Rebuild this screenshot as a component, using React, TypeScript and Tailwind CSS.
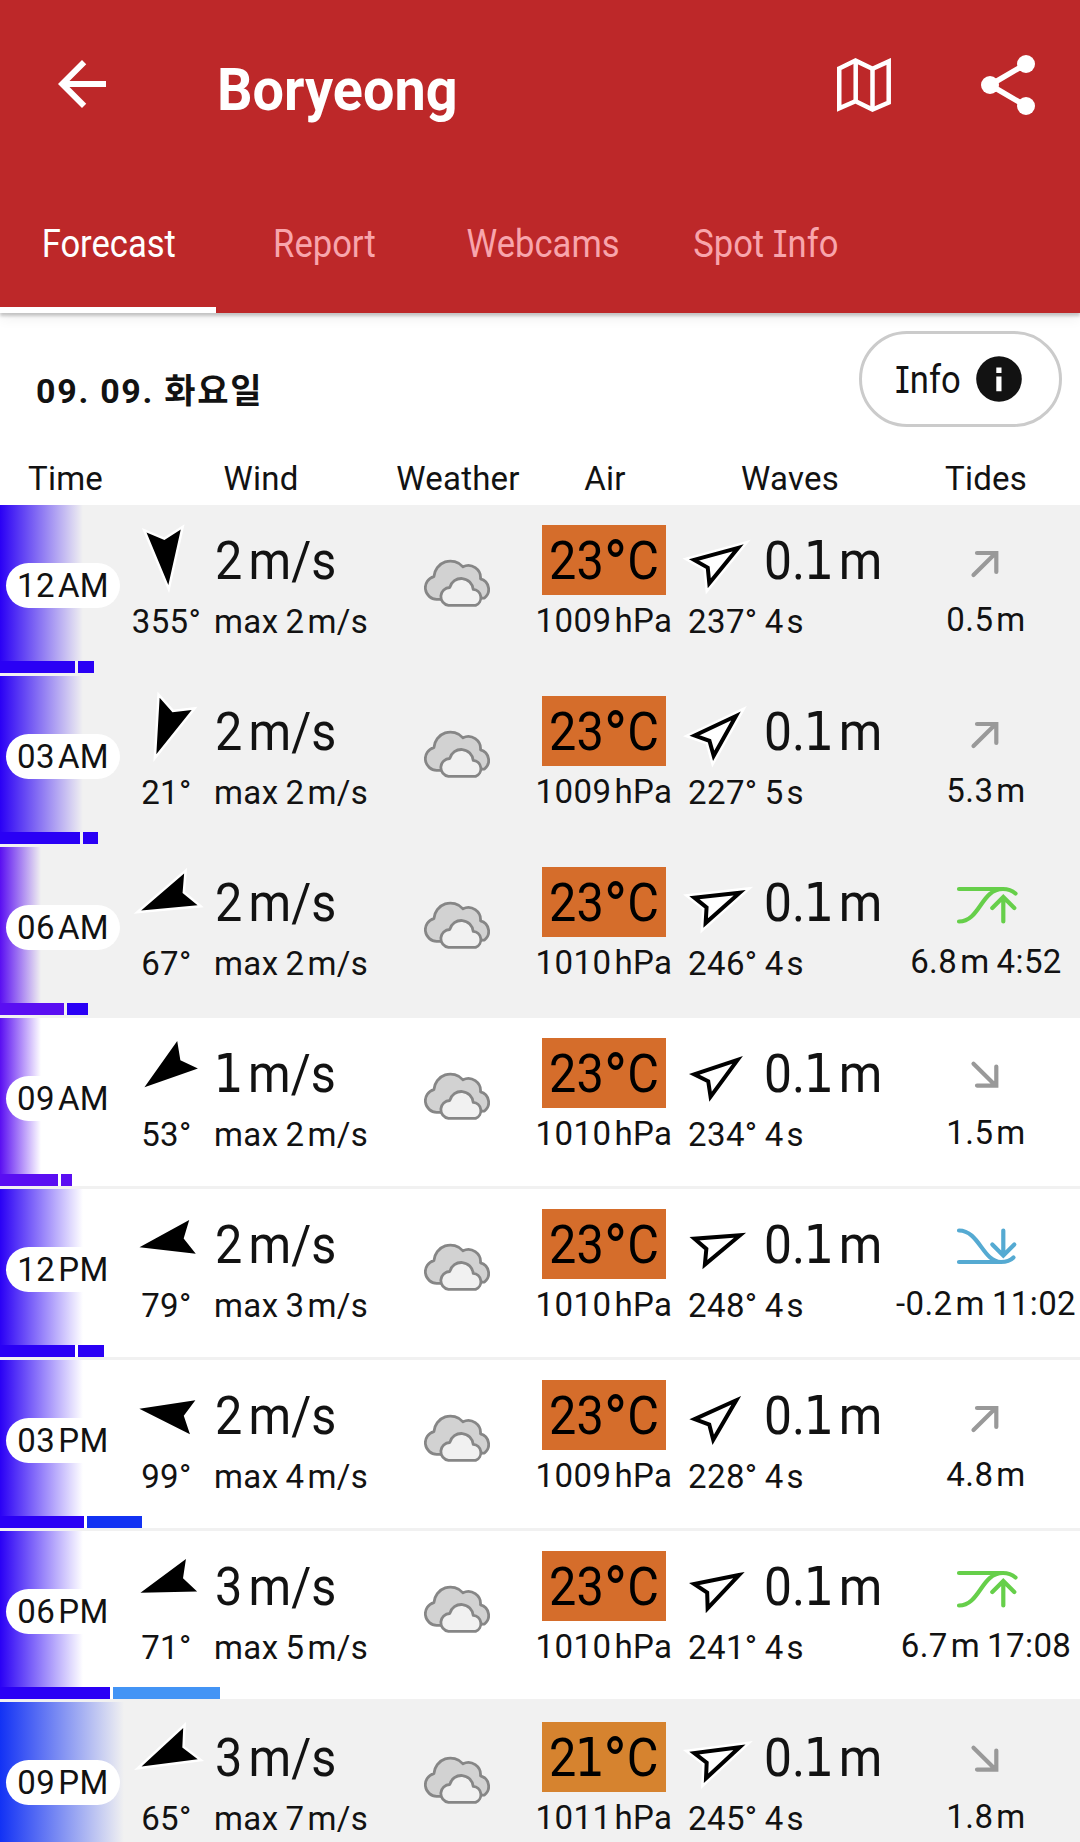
import { clsx } from "clsx";

const ROBOTO = "font-['Roboto','Noto_Sans_CJK_KR',sans-serif]";

const COLUMNS = "grid grid-cols-[130px_262px_132px_162px_206px_188px]";

const TABS = [
  { label: "Forecast", width: "w-[216px]" },
  { label: "Report", width: "w-[215px]" },
  { label: "Webcams", width: "w-[223px]" },
  { label: "Spot Info", width: "w-[222px]" },
];

type Tide = "rising" | "falling" | "high" | "low";

interface Forecast {
  hour: string;
  period: "AM" | "PM";
  night?: boolean;
  fade: string;
  bars: { width: number; color: string }[];
  windDir: number;
  wind: number;
  gust: number;
  temp: number;
  tempColor: string;
  pressure: number;
  waveDir: number;
  wavePeriod: number;
  tide: Tide;
  level: string;
  tideTime?: string;
}

const BLUE_FADE = "w-[83px] from-[#2a00f5]";
const VIOLET_FADE = "w-[41px] from-[#5a0ef2]";
const BLUE = "bg-[#2a00f5]";
const VIOLET = "bg-[#5a0ef2]";
const HOT = "bg-[#d56d2b]";

const ROWS: Forecast[] = [
  { hour: "12", period: "AM", night: true, fade: BLUE_FADE, bars: [{ width: 75, color: BLUE }, { width: 16, color: BLUE }], windDir: 355, wind: 2, gust: 2, temp: 23, tempColor: HOT, pressure: 1009, waveDir: 237, wavePeriod: 4, tide: "rising", level: "0.5" },
  { hour: "03", period: "AM", night: true, fade: BLUE_FADE, bars: [{ width: 80, color: BLUE }, { width: 15, color: BLUE }], windDir: 21, wind: 2, gust: 2, temp: 23, tempColor: HOT, pressure: 1009, waveDir: 227, wavePeriod: 5, tide: "rising", level: "5.3" },
  { hour: "06", period: "AM", night: true, fade: VIOLET_FADE, bars: [{ width: 64, color: VIOLET }, { width: 21, color: BLUE }], windDir: 67, wind: 2, gust: 2, temp: 23, tempColor: HOT, pressure: 1010, waveDir: 246, wavePeriod: 4, tide: "high", level: "6.8", tideTime: "4:52" },
  { hour: "09", period: "AM", fade: VIOLET_FADE, bars: [{ width: 58, color: VIOLET }, { width: 11, color: VIOLET }], windDir: 53, wind: 1, gust: 2, temp: 23, tempColor: HOT, pressure: 1010, waveDir: 234, wavePeriod: 4, tide: "falling", level: "1.5" },
  { hour: "12", period: "PM", fade: BLUE_FADE, bars: [{ width: 75, color: BLUE }, { width: 26, color: BLUE }], windDir: 79, wind: 2, gust: 3, temp: 23, tempColor: HOT, pressure: 1010, waveDir: 248, wavePeriod: 4, tide: "low", level: "-0.2", tideTime: "11:02" },
  { hour: "03", period: "PM", fade: BLUE_FADE, bars: [{ width: 84, color: BLUE }, { width: 55, color: "bg-[#1232f3]" }], windDir: 99, wind: 2, gust: 4, temp: 23, tempColor: HOT, pressure: 1009, waveDir: 228, wavePeriod: 4, tide: "rising", level: "4.8" },
  { hour: "06", period: "PM", fade: BLUE_FADE, bars: [{ width: 110, color: BLUE }, { width: 107, color: "bg-[#4394f5]" }], windDir: 71, wind: 3, gust: 5, temp: 23, tempColor: HOT, pressure: 1010, waveDir: 241, wavePeriod: 4, tide: "high", level: "6.7", tideTime: "17:08" },
  { hour: "09", period: "PM", night: true, fade: "w-[124px] from-[#1232f5]", bars: [{ width: 116, color: "bg-[#1232f3]" }], windDir: 65, wind: 3, gust: 7, temp: 21, tempColor: "bg-[#d6832f]", pressure: 1011, waveDir: 245, wavePeriod: 4, tide: "falling", level: "1.8" },
];

function BackIcon() {
  return (
    <svg viewBox="0 0 24 24" className="size-[72px]" fill="white">
      <path d="M20 11H7.83l5.59-5.59L12 4l-8 8 8 8 1.41-1.41L7.83 13H20v-2z" />
    </svg>
  );
}

function MapIcon() {
  return (
    <svg viewBox="0 0 54 54" className="h-[54px] w-[54px]" fill="none" stroke="white" strokeWidth="4.5">
      <path d="M2.25 10.5 18.5 2.6l17 8.2 16.2-7.4v41.1l-16.2 7-17-8.2-16.25 7z" />
      <path d="M18.7 3v40M35.5 11v40" />
    </svg>
  );
}

function ShareIcon() {
  return (
    <svg viewBox="0 0 54 60" className="h-[60px] w-[54px]" fill="white" stroke="white">
      <path d="M45 9 9 30l36 21" fill="none" strokeWidth="5.5" />
      <g stroke="none">
        <circle cx="45" cy="9" r="9" />
        <circle cx="9" cy="30" r="9" />
        <circle cx="45" cy="51" r="9" />
      </g>
    </svg>
  );
}

function InfoIcon() {
  return (
    <svg viewBox="0 0 46 46" className="size-[46px]">
      <circle cx="23" cy="23" r="22.8" fill="#121212" />
      <path d="M20.3 11.5h5.2V17h-5.2zM20.3 20.5h5.2v14.7h-5.2z" fill="white" />
    </svg>
  );
}

function WindArrow({ degrees }: { degrees: number }) {
  return (
    <svg viewBox="-35 -36 72 72" className="size-[72px] overflow-visible">
      <g transform={`rotate(${degrees})`} strokeMiterlimit="10">
        <path d="M0 27 17.2-27 0-18-17.2-27z" fill="black" stroke="white" strokeWidth="5" paintOrder="stroke" />
      </g>
    </svg>
  );
}

function WaveArrow({ degrees }: { degrees: number }) {
  return (
    <svg viewBox="-35 -36 70 72" className="h-[72px] w-[70px] overflow-visible">
      <g transform={`rotate(${degrees})`} strokeMiterlimit="10">
        <path d="M0 27 17.2-27 0-18-17.2-27z" fill="white" stroke="white" strokeWidth="5" />
        <path d="M0 20.5 13.9-23 0-15.8-13.9-23z" fill="white" stroke="black" strokeWidth="4" />
      </g>
    </svg>
  );
}

function CloudIcon() {
  return (
    <svg viewBox="0 0 66 48" className="h-12 w-[66px]" stroke="#868686" strokeWidth="2.8" strokeLinejoin="round">
      <path
        d="M18 40.3H12.7A11.55 11.55 0 0 1 9.9 17.6 16.6 16.6 0 0 1 39 7.8 12.2 12.2 0 0 1 56.5 19.8 11 11 0 0 1 60.5 39z"
        fill="#d2d2d2"
      />
      <path
        d="M24.5 46.4A9 9 0 0 1 25.8 28.5 11.9 11.9 0 0 1 49.2 30.4 8.3 8.3 0 0 1 51.6 46.4z"
        fill="#f1f1f1"
      />
    </svg>
  );
}

const TIDE_ICONS: Record<Tide, { color: string; d: string }> = {
  rising: { color: "#999999", d: "M16.5 30 38.5 8.2M20 8H39.3V27" },
  falling: { color: "#999999", d: "M16.5 5.8 38.5 27.5M20 27.6H39.3V8.6" },
  high: {
    color: "#66cf4a",
    d: "M2 2H46C52 2 55 3.5 58.5 6.5M2 34.5C23 34.5 24 2 46 2M46.3 34.5V10M35.3 21 46.3 10 57.3 21",
  },
  low: {
    color: "#55aad2",
    d: "M2 1.5C22 1.5 26 33 44 33 50 33 53 32 56.5 28.5M2 33H44M46.3 1.5V26M35.3 15.5 46.3 26.5 57.3 15.5",
  },
};

function TideIcon({ tide }: { tide: Tide }) {
  const { color, d } = TIDE_ICONS[tide];
  return (
    <svg viewBox="0 0 60 37" className="ml-[2px] h-[37px] w-[60px] overflow-visible">
      <path d={d} fill="none" stroke={color} strokeWidth="4.2" strokeLinecap="round" strokeLinejoin="miter" />
    </svg>
  );
}

function Unit({ children }: { children: string }) {
  return <span className="ml-[3px]">{children}</span>;
}

// Large figures; the "1" stands on a foot and the degree ring is as wide as a digit.
function Figure({ value, unit, className }: { value: string; unit?: string; className?: string }) {
  return (
    <span className={clsx("block w-fit text-[54px] tracking-normal whitespace-nowrap", className)}>
      {value.split("").map((char, i) => {
        if (char === "1") {
          return (
            <span key={i} className="-mx-[2px] font-['DejaVu_Sans'] text-[53px] leading-none">
              {char}
            </span>
          );
        }
        if (char === "°") {
          return (
            <span key={i} className="align-[-11px] text-[70px] leading-[0]">
              {char}
            </span>
          );
        }
        return char;
      })}
      {unit && <span className="ml-[7px]">{unit}</span>}
    </span>
  );
}

function SerifI() {
  return <span className="font-['Inter'] text-[37px] leading-none [font-feature-settings:'cv08','ss02']">I</span>;
}

function Header() {
  return (
    <header className="relative h-[313px] bg-[#bd2829] text-white shadow-[0_3px_3px_rgba(0,0,0,0.2),0_6px_12px_rgba(0,0,0,0.06)]">
      <div className="flex h-[200px] items-start pr-[45px] pl-[46px]">
        <div className="mt-12">
          <BackIcon />
        </div>
        <h1 className="mt-[50px] ml-[99px] origin-left scale-x-[0.93] text-[60px] leading-[80px] font-bold">
          Boryeong
        </h1>
        <div className="mt-[58px] ml-auto">
          <MapIcon />
        </div>
        <div className="mt-[55px] ml-[90px]">
          <ShareIcon />
        </div>
      </div>
      <nav className="flex h-[113px] text-[38px] leading-[50px]">
        {TABS.map(({ label, width }, i) => (
          <div
            key={label}
            className={clsx(
              "flex justify-center border-b-[6px] pt-[19px] pl-[2px]",
              width,
              i === 0 ? "border-white" : "border-transparent text-[#f8a5ac]",
            )}
          >
            <span className="scale-x-[0.91] whitespace-nowrap">
              {label === "Spot Info" ? <>Spot <SerifI />nfo</> : label}
            </span>
          </div>
        ))}
      </nav>
    </header>
  );
}

function ForecastRow({ row }: { row: Forecast }) {
  return (
    <div
      className={clsx(
        COLUMNS,
        "h-[171px] border-b-[3px] border-[#f1f1f1] tracking-[0.4px] [word-spacing:-1.5px]",
        row.night ? "bg-[#f1f1f1]" : "bg-white",
      )}
    >
      <div>
        <div className="grid h-[156px]">
          <div className={clsx("col-start-1 row-start-1 bg-linear-to-r to-transparent", row.fade)} />
          <div className="col-start-1 row-start-1 mt-[58px] ml-1.5 h-[45px] w-[114px] rounded-full bg-white text-center leading-[45px]">
            {row.hour}
            <Unit>{row.period}</Unit>
          </div>
        </div>
        <div className="flex h-3 gap-[3px]">
          {row.bars.map((bar, i) => (
            <div key={i} className={clsx("shrink-0", bar.color)} style={{ width: bar.width }} />
          ))}
        </div>
      </div>

      <div className="flex">
        <div className="flex w-[73px] flex-col items-center pt-[17px]">
          <WindArrow degrees={row.windDir} />
          <div className="mt-2 leading-10">{row.windDir}°</div>
        </div>
        <div className="ml-[11px] pt-6">
          <div className="h-16 leading-16">
            <Figure value={`${row.wind}`} unit="m/s" className="ml-px origin-left scale-x-90" />
          </div>
          <div className="mt-[9px] leading-10 whitespace-nowrap">
            max {row.gust}
            <Unit>m/s</Unit>
          </div>
        </div>
      </div>

      <div className="flex justify-center pt-[54px] pr-[2px]">
        <CloudIcon />
      </div>

      <div className="flex flex-col items-center pt-5 pr-[2px]">
        <div className={clsx("flex h-[70px] w-[124px] justify-center pt-px leading-[70px] text-black", row.tempColor)}>
          <Figure value={`${row.temp}°C`} className="scale-x-90" />
        </div>
        <div className="mt-[6px] leading-10">
          {row.pressure}
          <Unit>hPa</Unit>
        </div>
      </div>

      <div className="pt-[18px]">
        <div className="flex h-[72px]">
          <WaveArrow degrees={row.waveDir} />
          <div className="ml-2 pt-1.5 leading-16">
            <Figure value="0.1" unit="m" className="origin-left scale-x-[0.92]" />
          </div>
        </div>
        <div className="mt-[7px] ml-[2px] leading-10">
          {row.waveDir}° {row.wavePeriod}
          <Unit>s</Unit>
        </div>
      </div>

      <div className="flex flex-col items-center pt-10">
        <TideIcon tide={row.tide} />
        <div className="mt-[18px] leading-10 whitespace-nowrap">
          {row.level}
          <Unit>m</Unit>
          {row.tideTime && ` ${row.tideTime}`}
        </div>
      </div>
    </div>
  );
}

export default function App() {
  return (
    <div className={clsx(ROBOTO, "h-[1842px] w-[1080px] overflow-hidden bg-white text-[33px] text-[#121212]")}>
      <Header />
      <div className="flex h-[146px] items-start justify-between pr-[18px] pl-9">
        <h2 className="mt-[58px] text-[34px] leading-10 font-bold tracking-[1.7px]">09. 09. 화요일</h2>
        <button className="mt-[18px] flex h-24 w-[203px] items-center rounded-full border-[3px] border-[#cbcbcb] pl-[33px] text-[38px]">
          <span className="mt-[2px] w-[67px] origin-left scale-x-[0.91] text-left whitespace-nowrap">
            <SerifI />
            nfo
          </span>
          <span className="ml-[14px]">
            <InfoIcon />
          </span>
        </button>
      </div>
      <div className={clsx(COLUMNS, "h-[46px] text-center leading-10 tracking-[0.2px]")}>
        <div className="pl-px">Time</div>
        <div>Wind</div>
        <div>Weather</div>
        <div>Air</div>
        <div className="pl-[2px]">Waves</div>
        <div>Tides</div>
      </div>
      {ROWS.map((row) => (
        <ForecastRow key={row.hour + row.period} row={row} />
      ))}
    </div>
  );
}
